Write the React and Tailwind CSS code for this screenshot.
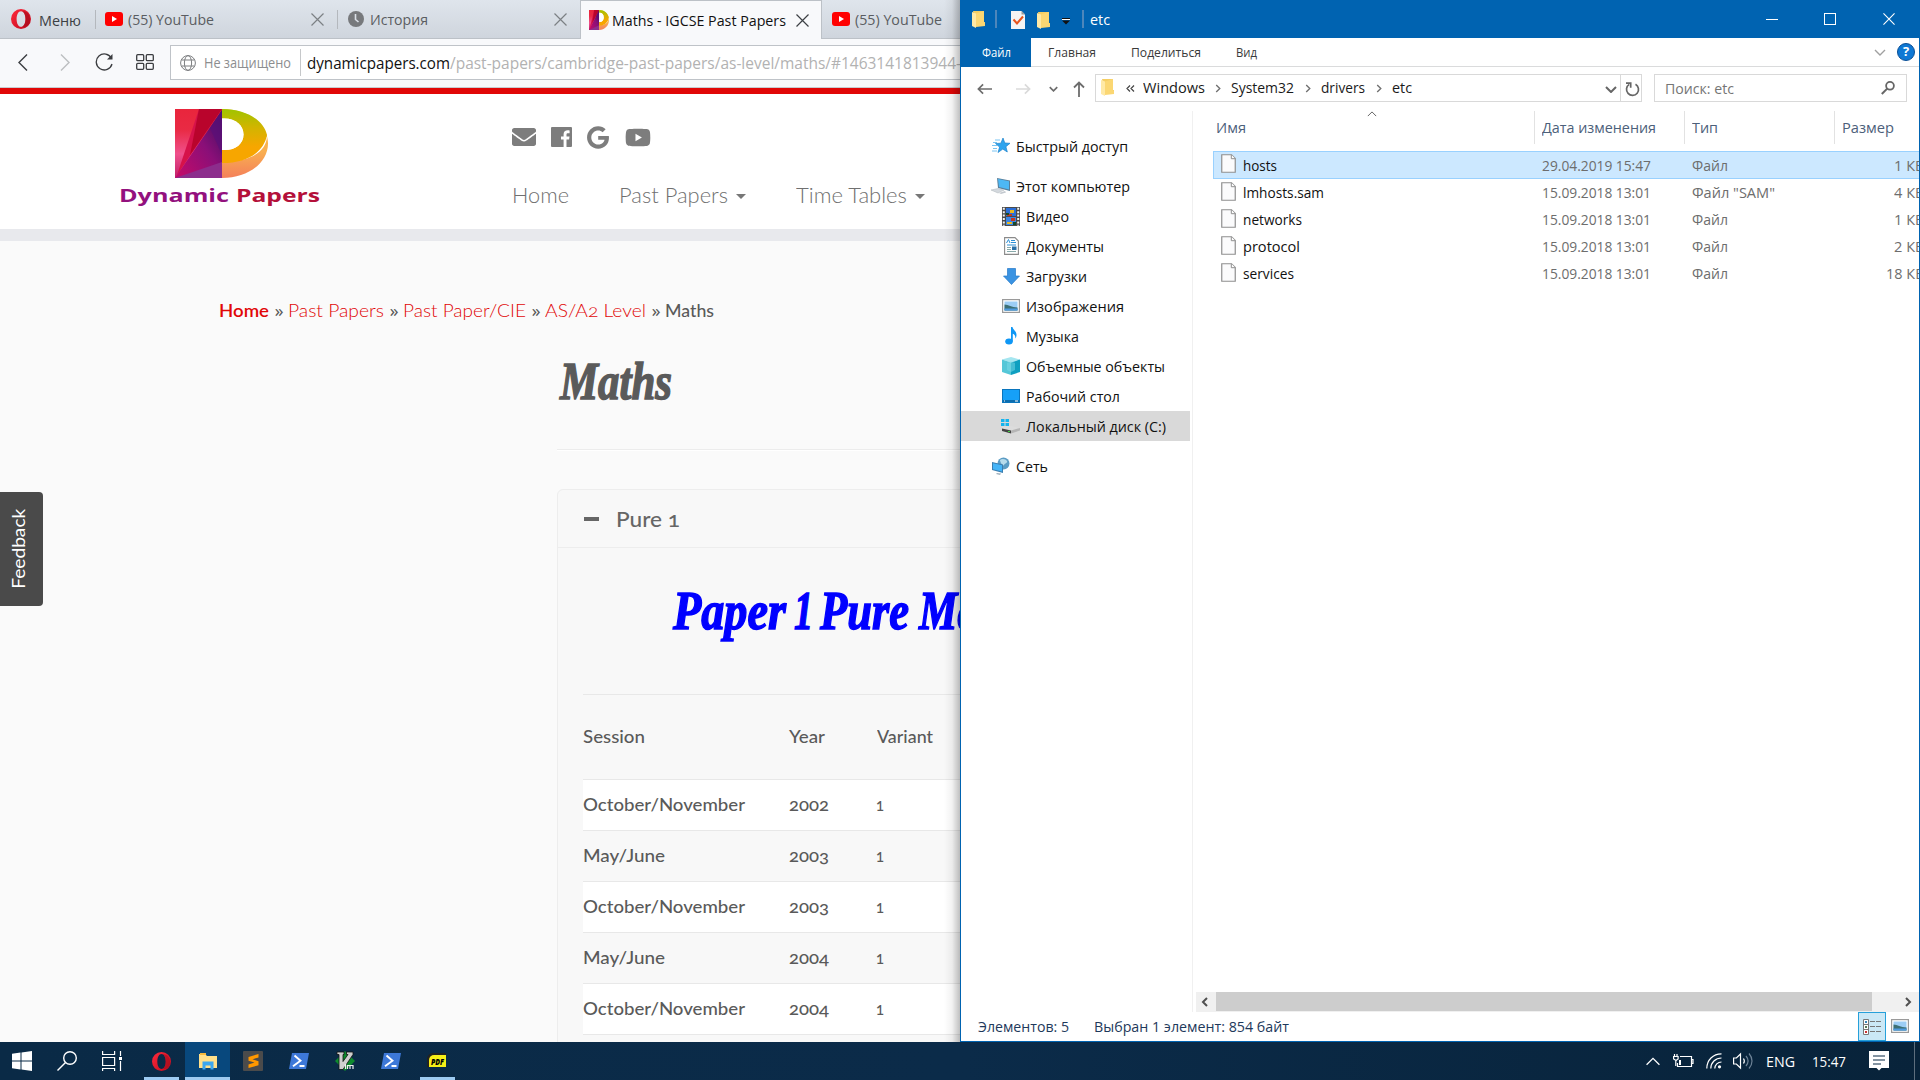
import React, { useLayoutEffect, useRef, useState } from "react";
import { FaEnvelope, FaGoogle, FaYoutube } from "react-icons/fa";

const ui = "font-['Open_Sans','Noto_Sans',sans-serif]";
const lato = "font-['Lato',sans-serif]";
const script = "font-['Liberation_Serif',serif] font-bold italic";

/* Text condensed or widened to fill the width given by its classes. */
function Fit({ children, className = "" }) {
  const outer = useRef(null);
  const inner = useRef(null);
  const [scale, setScale] = useState(1);
  useLayoutEffect(() => {
    setScale(outer.current.offsetWidth / parseFloat(getComputedStyle(inner.current).width));
  }, []);
  return (
    <span ref={outer} className={`block shrink-0 whitespace-nowrap ${className}`}>
      <span ref={inner} className="inline-block origin-left" style={{ transform: `scaleX(${scale})` }}>
        {children}
      </span>
    </span>
  );
}

/* ---------- icons ---------- */
function Opera({ className }) {
  return (
    <svg viewBox="0 0 20 20" className={className}>
      <defs>
        <linearGradient id="op" x1="0" x2="1" y1="0" y2="1">
          <stop offset="0" stopColor="#ff2a3c" />
          <stop offset="1" stopColor="#c00a1e" />
        </linearGradient>
      </defs>
      <path fillRule="evenodd" fill="url(#op)" d="M10 0a10 10 0 1 0 0 20a10 10 0 1 0 0-20zM10 2.2c2.7 0 4.4 3.4 4.4 7.8s-1.700 7.800-4.400 7.800S5.600 14.400 5.600 10 7.300 2.200 10 2.200z" />
      <path fill="#a30d1c" opacity=".6" d="M11 2.300C17 2 19.500 7 19 12c-.5 4-4 6.500-8 5.700 2.500-1 3.600-4.200 3.600-7.700S13.500 3.300 11 2.300z" />
    </svg>
  );
}
function YT({ className }) {
  return (
    <svg viewBox="0 0 18 14" className={className}>
      <rect width="18" height="14" rx="3" fill="#f00" />
      <path d="M7 4l5 3-5 3z" fill="#fff" />
    </svg>
  );
}
function Cross({ className }) {
  return (
    <svg viewBox="0 0 13 13" fill="none" stroke="currentColor" strokeWidth="1.2" className={className}>
      <path d="M.5.5l12 12M12.500.5l-12 12" />
    </svg>
  );
}
function Chev({ d = "M1 1l5 5 5-5", w = 1.5, vb = "0 0 12 7", className }) {
  return (
    <svg viewBox={vb} fill="none" stroke="currentColor" strokeWidth={w} className={className}>
      <path d={d} />
    </svg>
  );
}
function LogoD({ className, id }) {
  return (
    <svg viewBox="0 0 93 69" preserveAspectRatio="none" className={className}>
      <defs>
        <linearGradient id={id + "a"} x1="0" x2="0" y1="0" y2="1">
          <stop offset="0" stopColor="#e9253c" />
          <stop offset=".3" stopColor="#e92a44" />
          <stop offset=".65" stopColor="#f0508c" />
          <stop offset="1" stopColor="#c0206a" />
        </linearGradient>
        <linearGradient id={id + "b"} x1="0" x2="0" y1="0" y2="1">
          <stop offset="0" stopColor="#9fc400" />
          <stop offset=".35" stopColor="#d3b400" />
          <stop offset=".7" stopColor="#f7a600" />
        </linearGradient>
        <linearGradient id={id + "c"} x1="0" x2="0" y1="0" y2="1">
          <stop offset="0" stopColor="#f9b93a" />
          <stop offset=".6" stopColor="#f9b050" />
          <stop offset="1" stopColor="#f4805a" />
        </linearGradient>
        <linearGradient id={id + "d"} x1="1" x2="0" y1="0" y2="1">
          <stop offset="0" stopColor="#38105f" />
          <stop offset=".45" stopColor="#8a0f78" />
          <stop offset="1" stopColor="#c80a68" />
        </linearGradient>
      </defs>
      <rect width="47" height="69" fill={`url(#${id}a)`} />
      <path d="M24 0H47L2 66z" fill="#d6124a" />
      <path d="M24 0H47L15 46z" fill="#b9042c" />
      <path d="M47 1V69H0z" fill={`url(#${id}d)`} />
      <path d="M47 1V46L35 19z" fill="#5a1079" opacity=".7" />
      <path d="M47 53V69H0z" fill="#8c2d8c" />
      <path d="M47 0C73 0 93 15 93 34.500S73 69 47 69V53C80 53 91 40 92 28z" fill={`url(#${id}c)`} />
      <path fillRule="evenodd" d="M47 0C72 0 89 12 92 26C89 42 74 54 47 54zM47 9.500V41C60 42 68.500 35 68.500 25.500S60 8.500 47 9.500z" fill={`url(#${id}b)`} />
      <path d="M47 9.500V41C60 42 68.500 35 68.500 25.500S60 8.500 47 9.500z" fill="#fff" />
    </svg>
  );
}
function FolderStrip({ className }) {
  return (
    <svg viewBox="0 0 13 17" className={className}>
      <path d="M1 0h11v11h1v4H4z" fill="#f5ce63" />
      <path d="M0 1l4 1.500V17L0 15z" fill="#ffe9a6" />
      <path d="M4 2.500L12 0v11l1 1v3l-9 1z" fill="#fbd773" />
    </svg>
  );
}
function FileIcon() {
  return (
    <svg viewBox="0 0 15 19" className="h-[19px] w-[15px] shrink-0">
      <path d="M.75.75H10.500L14.250 4.500V18.250H.75z" fill="#fbfbfc" stroke="#8f8f8f" strokeWidth="1.200" />
      <path d="M10.300.75V4.700H14.250" fill="#fff" stroke="#8f8f8f" strokeWidth="1" />
    </svg>
  );
}
const sideIcons = {
  star: (
    <svg viewBox="0 0 18 18" className="h-[18px] w-[18px]">
      <path d="M11 1l1.800 5 5.200.3-4.100 3.400 1.400 5.300-4.500-2.900L6 15.500l1.600-5.400L3.500 6.500l5.400-.3z" fill="#2fa4ee" stroke="#1b82cc" strokeWidth=".7" />
      <path d="M3 3h5M1 5.500h4M0 8.500h5M1 11.500h4M0 14h5" stroke="#6bbdf0" strokeWidth=".9" />
    </svg>
  ),
  pc: (
    <svg viewBox="0 0 20 18" className="h-[18px] w-[20px]">
      <path d="M6 1l13 2.500V14L7 11z" fill="#5a7f9a" />
      <path d="M7 2l11 2.200V12.500L8 10z" fill="#4db8f5" />
      <path d="M0 13l7-1.500 6 1.500-6 3z" fill="#d4d9de" stroke="#adb4bb" strokeWidth=".5" />
      <path d="M8 16l6-2 1 1.500-5 1.500z" fill="#c3c9cf" />
    </svg>
  ),
  video: (
    <svg viewBox="0 0 18 19" className="h-[19px] w-[18px]">
      <rect width="18" height="19" fill="#4a4a4a" />
      <path d="M1.800.8v18M16.200.8v18" stroke="#f3f3f3" strokeWidth="2" strokeDasharray="2 1.400" />
      <rect x="4" y="1" width="10" height="8" fill="#2c6fd6" />
      <rect x="4" y="10" width="10" height="8" fill="#3a86e8" />
      <path d="M8 3h4v3H8zM5 15h5v2H5z" fill="#e8b820" />
      <path d="M5 7h5v2H5zM9 11h4v3H9z" fill="#c8371c" />
      <path d="M4 6h3v2H4zM11 15h3v3h-3z" fill="#164a2a" />
    </svg>
  ),
  doc: (
    <svg viewBox="0 0 15 18" className="h-[18px] w-[15px]">
      <path d="M.6.6H11L14.400 4v13.400H.6z" fill="#fff" stroke="#8a8a8a" strokeWidth="1.100" />
      <path d="M2.500 6l2-3.500L6 6M7 3.500h4M7 5.500h5M3 8h9" stroke="#2c8fd6" fill="none" />
      <path d="M3 10.500h4M3 12.500h4M3 14.500h9" stroke="#8aa" />
      <rect x="8" y="9.500" width="4.500" height="3.500" fill="#2a70a8" />
    </svg>
  ),
  down: (
    <svg viewBox="0 0 17 17" className="h-[17px] w-[17px]">
      <path d="M4.500.5h8V8H16.500L8.500 16.500.5 8H4.500z" fill="#3a93e2" stroke="#2478c8" strokeWidth=".7" />
    </svg>
  ),
  pic: (
    <svg viewBox="0 0 18 14" className="h-[14px] w-[18px]">
      <rect x=".6" y=".6" width="16.800" height="12.800" fill="#fff" stroke="#9a9a9a" strokeWidth="1.200" />
      <rect x="2.500" y="2.500" width="13" height="9" fill="#9ccdf5" />
      <path d="M2.500 5.500c4 0 7 3 13 3v3h-13z" fill="#3d6f74" />
      <path d="M2.500 9.500h13v2h-13z" fill="#4f9be0" />
    </svg>
  ),
  music: (
    <svg viewBox="0 0 12 18" className="h-[18px] w-[12px]">
      <ellipse cx="4" cy="14.500" rx="3.800" ry="3" fill="#0f97f5" />
      <path d="M6 0h1.500c.5 3 4.200 4 4 8 0 1.500-.5 2.500-1.200 3.500.3-3-1-4.300-2.500-4.800V14.500H6z" fill="#0f97f5" />
    </svg>
  ),
  cube: (
    <svg viewBox="0 0 18 18" className="h-[18px] w-[18px]">
      <path d="M9 0l9 2.500L9 5.500 0 2.500z" fill="#a5e6f0" />
      <path d="M0 2.500l9 3V18l-9-3z" fill="#55c7d8" />
      <path d="M18 2.500l-9 3V18l9-3z" fill="#0e9fc0" />
      <path d="M5 6l4-1.500 4 1.500v7l-4 2-4-2z" fill="#7edce8" opacity=".5" />
    </svg>
  ),
  desk: (
    <svg viewBox="0 0 18 14" className="h-[14px] w-[18px]">
      <rect x=".5" y=".5" width="17" height="13" fill="#16a0f8" stroke="#0a75bd" />
      <path d="M1 12h16" stroke="#0b5d96" strokeWidth="1.500" />
      <path d="M2 12h1M13 12h3" stroke="#fff" />
    </svg>
  ),
  disk: (
    <svg viewBox="0 0 20 16" className="h-[16px] w-[20px]">
      <path d="M1 9l7-1.500 11 2.500v2.500L10 15.500 1 12z" fill="#dcdcdc" />
      <path d="M1 10.500l9 2V15.500L1 13z" fill="#444" />
      <path d="M10 12.500L19 10v2.500l-9 3z" fill="#b5b5b5" />
      <path d="M0 1h3.500v3H0zM4.500 1H8v3H4.500zM0 5h3.500v3H0zM4.500 5H8v3H4.500z" fill="#14b4ee" />
      <path d="M7 13.500h2" stroke="#3fd33f" />
    </svg>
  ),
  net: (
    <svg viewBox="0 0 18 18" className="h-[18px] w-[18px]">
      <circle cx="11.500" cy="6.500" r="6" fill="#5b9cc4" />
      <path d="M8 3c2-2 6-1 7 1s-2 2-3 4-4-3-4-5z" fill="#b7dcec" />
      <path d="M0 5l11 2.500V16L0 13z" fill="#3a7eb0" />
      <path d="M1 6.200l9 2V14.500L1 12.300z" fill="#45b4f7" />
      <path d="M5 16l4 .5-1 1.500-4-1z" fill="#9fb0bd" />
    </svg>
  ),
};

/* ---------- browser ---------- */
function TabStrip() {
  return (
    <div className={`flex h-[39px] items-center border-b border-[#bcc1c7] bg-gradient-to-b from-[#dfe5ec] to-[#cfd5dd] text-[15px] text-[#5a5d61] ${ui}`}>
      <Opera className="ml-[11px] h-5 w-5 shrink-0" />
      <Fit className="ml-2 w-[42px] pt-[2px] text-[#3c4044]">Меню</Fit>
      <div className="ml-[14px] h-[19px] w-px shrink-0 bg-[#b4b8bd]" />
      <YT className="ml-[9px] h-[14px] w-[18px] shrink-0" />
      <Fit className="ml-[5px] w-[86px]">(55) YouTube</Fit>
      <Cross className="ml-[97px] h-[13px] w-[13px] shrink-0 text-[#7c8084]" />
      <div className="ml-[13px] h-[19px] w-px shrink-0 bg-[#b4b8bd]" />
      <svg viewBox="0 0 16 16" className="ml-[10px] h-4 w-4 shrink-0">
        <circle cx="8" cy="8" r="8" fill="#77797c" />
        <path d="M7.500 3v5.500l3 2.500" fill="none" stroke="#dbe0e7" strokeWidth="1.600" />
      </svg>
      <Fit className="ml-[6px] w-[58px]">История</Fit>
      <Cross className="ml-[126px] h-[13px] w-[13px] shrink-0 text-[#7c8084]" />
      <div className="ml-[13px] -mb-px flex h-[39px] w-[242px] shrink-0 items-center self-start border border-b-0 border-[#bcc1c7] bg-[#f8f9fb] text-[#111]">
        <LogoD id="t" className="ml-[8px] h-5 w-5 shrink-0" />
        <Fit className="ml-[3px] w-[174px]">Maths - IGCSE Past Papers</Fit>
        <Cross className="ml-[10px] h-[13px] w-[13px] shrink-0 text-[#3c4044]" />
      </div>
      <YT className="ml-[10px] h-[14px] w-[18px] shrink-0" />
      <Fit className="ml-[5px] w-[87px]">(55) YouTube</Fit>
    </div>
  );
}

function AddressRow() {
  return (
    <div className={`flex h-[49px] items-center border-b border-[#c9ccd0] bg-[#f8f9fb] text-[#3b3d40] ${ui}`}>
      <Chev vb="0 0 10 17" d="M9 .5L1 8.500l8 8" w={1.400} className="-mt-[2px] ml-[18px] h-[17px] w-[10px] shrink-0" />
      <Chev vb="0 0 10 17" d="M1 .5l8 8-8 8" w={1.400} className="-mt-[2px] ml-8 h-[17px] w-[10px] shrink-0 text-[#bcbec0]" />
      <svg viewBox="0 0 19 18" className="-mt-[2px] ml-[25px] h-[18px] w-[19px] shrink-0" fill="none" stroke="currentColor" strokeWidth="1.300">
        <path d="M16.500 5.500A8 8 0 1 0 17 11" />
        <path d="M17.500 1v5.500H12z" fill="currentColor" stroke="none" />
      </svg>
      <svg viewBox="0 0 18 16" className="-mt-[2px] ml-[22px] h-4 w-[18px] shrink-0" fill="none" stroke="currentColor" strokeWidth="1.300">
        <rect x=".7" y=".7" width="7" height="6" rx="1" /><rect x="10.300" y=".7" width="7" height="6" rx="1" />
        <rect x=".7" y="9.300" width="7" height="6" rx="1" /><rect x="10.300" y="9.300" width="7" height="6" rx="1" />
      </svg>
      <div className="-mt-px ml-[16px] flex h-[35px] w-[900px] shrink-0 items-center border border-[#bfc3c8] bg-white">
        <svg viewBox="0 0 16 16" className="ml-[9px] h-4 w-4 shrink-0" fill="none" stroke="#7c7e80">
          <circle cx="8" cy="8" r="7.400" /><ellipse cx="8" cy="8" rx="3.600" ry="7.400" /><path d="M1.500 5h13M1.500 11h13" />
        </svg>
        <Fit className="ml-2 w-[87px] text-[14px] text-[#8c8e90]">Не защищено</Fit>
        <div className="ml-[9px] h-[27px] w-px shrink-0 bg-[#c6c8ca]" />
        <Fit className="ml-[6px] w-[143px] pt-px text-[16px] text-[#111]">dynamicpapers.com</Fit>
        <Fit className="w-[511px] pt-px text-[16px] text-[#b2b2b2]">/past-papers/cambridge-past-papers/as-level/maths/#1463141813944-</Fit>
      </div>
    </div>
  );
}

function Caret() {
  return <span className="mt-[3px] h-0 w-0 shrink-0 border-x-[5px] border-t-[5px] border-x-transparent border-t-[#777]" />;
}

function SiteHeader() {
  return (
    <div className="flex h-[147px] border-b-[12px] border-[#e8e9ed] bg-white">
      <div className="ml-[119px] w-[201px] shrink-0 pt-[15px]">
        <LogoD id="l" className="ml-[56px] h-[69px] w-[93px]" />
        <div className={`mt-[8px] flex h-5 items-center text-[17px] font-bold ${ui}`}>
          <Fit className="w-[110px] text-[#93117e]">Dynamic</Fit>
          <Fit className="ml-[7px] w-[84px] text-[#b4103a]">Papers</Fit>
        </div>
      </div>
      <div className="ml-[192px] pt-[32px]">
        <div className="flex h-[22px] items-center text-[#7d7d7d]">
          <FaEnvelope className="h-6 w-6" />
          <svg viewBox="0 0 21 20" className="ml-[15px] h-5 w-[21px]">
            <path fill="currentColor" d="M1 0h19a1 1 0 0 1 1 1v18a1 1 0 0 1-1 1h-4.500v-7.500h2.600l.4-3h-3V7.600c0-.9.4-1.400 1.500-1.400h1.600V3.500c-3.800-.6-6 .6-6 3.700v2.300H10v3h2.600V20H1a1 1 0 0 1-1-1V1a1 1 0 0 1 1-1z" />
          </svg>
          <FaGoogle className="ml-[15px] h-[23px] w-[22px]" />
          <FaYoutube className="ml-[16px] h-[25px] w-[26px]" />
        </div>
        <div className={`mt-[35px] flex h-6 items-center text-[21px] font-light text-[#707070] ${lato}`}>
          <Fit className="w-[57px]">Home</Fit>
          <Fit className="ml-[50px] mr-2 w-[109px]">Past Papers</Fit>
          <Caret />
          <Fit className="ml-[50px] mr-2 w-[111px]">Time Tables</Fit>
          <Caret />
        </div>
      </div>
    </div>
  );
}

const sessions = [
  ["October/November", "2002"],
  ["May/June", "2003"],
  ["October/November", "2003"],
  ["May/June", "2004"],
  ["October/November", "2004"],
];

function Raquo() {
  return <Fit className="mx-[4.500px] w-[10px] font-normal text-[#5a5a5a]">»</Fit>;
}

function PageBody() {
  return (
    <div className={`relative min-h-0 flex-1 overflow-hidden bg-[#fafafa] text-[#5a5a5a] [font-feature-settings:'onum'] ${lato}`}>
      <div className="ml-[219px] mt-[57px] flex h-6 items-center pt-px text-[18px] font-light text-[#e10707]">
        <Fit className="w-[50px] font-semibold">Home</Fit>
        <Raquo />
        <Fit className="w-[96px]">Past Papers</Fit>
        <Raquo />
        <Fit className="w-[123px]">Past Paper/CIE</Fit>
        <Raquo />
        <Fit className="w-[101px]">AS/A2 Level</Fit>
        <Raquo />
        <Fit className="w-[49px] font-medium text-[#5a5a5a]">Maths</Fit>
      </div>
      <div className={`ml-[560px] mt-[29px] flex h-[60px] items-center pt-[2px] text-[53px] [-webkit-text-stroke:1.500px_#5a5a5a] ${script}`}>
        <Fit className="w-[112px]">Maths</Fit>
      </div>
      <div className="ml-[557px] mt-[38px] h-[2px] border-t border-[#ececec] bg-white" />
      <div className="-mr-2 ml-[557px] mt-[38px] h-[700px] rounded-md border border-[#ededed] bg-[#f8f8f8]">
        <div className="flex h-[58px] items-center border-b border-[#ededed] pl-[26px] text-[22px] font-medium text-[#666]">
          <span className="h-[4px] w-[15px] bg-[#666]" />
          <Fit className="ml-[17px] w-[64px]">Pure 1</Fit>
        </div>
        <div className={`ml-[115px] mt-8 flex h-[60px] items-center pt-[2px] text-[54px] text-[#0000ff] [-webkit-text-stroke:1.500px_#0000ff] ${script}`}>
          <Fit className="w-[113px]">Paper</Fit>
          <Fit className="ml-[8px] w-[19px]">1</Fit>
          <Fit className="ml-[7px] w-[89px]">Pure</Fit>
          <Fit className="ml-[10px] w-[60px]">Ma</Fit>
        </div>
        <div className="ml-[25px] mt-[54px] border-t border-[#e8e8e8] text-[18px] font-medium">
          <div className="flex h-[85px] items-center border-b border-[#e8e8e8] pb-[2px]">
            <div className="w-[206px]"><Fit className="w-[62px]">Session</Fit></div>
            <div className="w-[87px]"><Fit className="w-[36px]">Year</Fit></div>
            <Fit className="ml-px w-[56px]">Variant</Fit>
          </div>
          {sessions.map(([s, y], i) => (
            <div key={i} className="flex h-[51px] items-center border-b border-[#e8e8e8] pb-[2px] odd:bg-[#f8f8f8] even:bg-white">
              <div className="w-[206px]">
                <Fit className={s === "May/June" ? "w-[82px]" : "w-[162px]"}>{s}</Fit>
              </div>
              <div className="w-[87px]"><Fit className="w-[40px]">{y}</Fit></div>
              <Fit className="w-[8px]">1</Fit>
            </div>
          ))}
        </div>
      </div>
      <div className="absolute left-0 top-[251px] flex h-[114px] w-[43px] items-center justify-center rounded-r-[4px] bg-[#4a4a4a] pr-[5px] text-[17px] text-white">
        <Fit className="w-[80px] -rotate-90">Feedback</Fit>
      </div>
    </div>
  );
}

function Browser() {
  return (
    <div className="relative flex h-full w-[960px] shrink-0 flex-col overflow-hidden">
      <TabStrip />
      <AddressRow />
      <div className="h-[6px] shrink-0 bg-[#e10707]" />
      <SiteHeader />
      <PageBody />
      <div className="absolute inset-y-0 right-0 w-[16px] bg-gradient-to-r from-transparent via-black/5 to-black/25" />
    </div>
  );
}

/* ---------- explorer ---------- */
function TitleBar() {
  return (
    <div className="flex h-[38px] shrink-0 items-center bg-[#0063b1] text-white">
      <FolderStrip className="ml-[11px] h-[17px] w-[13px]" />
      <div className="ml-[10px] h-[18px] w-[2px] bg-[#4d86bb]" />
      <svg viewBox="0 0 14 18" className="ml-[14px] mt-[2px] h-[18px] w-[14px]">
        <path d="M0 0h10.500L14 3.500V18H0z" fill="#f4f4f4" /><path d="M10.500 0L14 3.500h-3.500z" fill="#9a9a9a" />
        <path d="M2.500 8.500l3.500 4L12 5.500" fill="none" stroke="#e8541c" strokeWidth="2" />
      </svg>
      <FolderStrip className="ml-[12px] mt-[2px] h-[17px] w-[13px]" />
      <svg viewBox="0 0 8 7" className="ml-[12px] mt-1 h-[7px] w-2">
        <path d="M0 .5h8" stroke="#111" /><path d="M0 1.500h8" stroke="#fff" /><path d="M0 2.500h8L4 6.500z" fill="#111" />
      </svg>
      <div className="ml-[12px] h-[18px] w-[2px] bg-[#4d86bb]" />
      <Fit className="ml-[6px] w-[20px] text-[15px]">etc</Fit>
      <div className="ml-[656px] h-px w-[12px] bg-white" />
      <div className="ml-[46px] h-[12px] w-[12px] border border-white" />
      <Cross className="ml-[47px] h-[12px] w-[12px]" />
    </div>
  );
}

function Ribbon() {
  return (
    <div className="flex h-[29px] shrink-0 items-center border-b border-[#dadbdc] text-[12.500px] text-[#3a3a3a]">
      <div className="-mb-px flex h-[29px] w-[70px] items-center bg-[#0063b1] pl-[21px] pt-px text-white">
        <Fit className="w-[29px]">Файл</Fit>
      </div>
      <Fit className="ml-[17px] w-[48px] pt-[2px]">Главная</Fit>
      <Fit className="ml-[35px] w-[70px] pt-[2px]">Поделиться</Fit>
      <Fit className="ml-[35px] w-[21px] pt-[2px]">Вид</Fit>
      <Chev className="ml-[617px] h-[7px] w-[12px] text-[#a0a0a0]" w={1.400} />
      <div className="ml-[11px] flex h-[18px] w-[18px] items-center justify-center rounded-full border border-[#0a4f96] bg-[#0f78d4] text-[13px] font-bold text-white">?</div>
    </div>
  );
}

function Crumb() {
  return <Chev vb="0 0 6 10" d="M1 1l4 4-4 4" w={1.500} className="h-[9px] w-[6px] shrink-0 text-[#707070]" />;
}

function PathRow() {
  return (
    <div className="flex h-[44px] shrink-0 pt-[7px] text-[15px] text-[#1a1a1a]">
      <div className="flex h-[28px] items-center text-[#6d6d6d]">
        <Chev vb="0 0 16 12" d="M16 6H1.500M6.500 1l-5 5 5 5" w={1.800} className="ml-[16px] mt-px h-[12px] w-[15px]" />
        <Chev vb="0 0 16 12" d="M0 6h14.500M9.500 1l5 5-5 5" w={1.800} className="ml-[24px] mt-px h-[12px] w-[15px] text-[#dadada]" />
        <Chev className="ml-[18px] mt-px h-[6px] w-[9px]" w={2.200} />
        <Chev vb="0 0 12 16" d="M6 16V1.500M1 6.500l5-5 5 5" w={1.800} className="ml-[15px] mt-[2px] h-[16px] w-[12px]" />
      </div>
      <div className="ml-[10px] flex h-[28px] w-[547px] items-center border border-[#d9d9d9]">
        <FolderStrip className="ml-[5px] -mt-[2px] h-[17px] w-[13px] shrink-0" />
        <Chev vb="0 0 9 7" d="M4 .5l-3 3 3 3M8 .5l-3 3 3 3" w={1.200} className="ml-[12px] h-[7px] w-[9px] shrink-0 text-[#444]" />
        <Fit className="-mt-[2px] ml-[8px] w-[62px]">Windows</Fit>
        <span className="w-[10px]" /><Crumb />
        <Fit className="-mt-[2px] ml-[10px] w-[63px]">System32</Fit>
        <span className="w-[11px]" /><Crumb />
        <Fit className="-mt-[2px] ml-[10px] w-[44px]">drivers</Fit>
        <span className="w-[11px]" /><Crumb />
        <Fit className="-mt-[2px] ml-[10px] w-[20px]">etc</Fit>
        <Chev className="ml-[193px] mt-[3px] h-[7px] w-[12px] shrink-0 text-[#666]" w={2} />
        <div className="ml-[3px] h-full w-px shrink-0 bg-[#d9d9d9]" />
        <svg viewBox="0 0 15 15" className="ml-[4px] mt-[2px] h-[15px] w-[15px] shrink-0" fill="none" stroke="#666" strokeWidth="1.700">
          <path d="M10.500 2.200A6 6 0 1 1 4.200 2.400" /><path d="M1 1.200h4.700v4.500" />
        </svg>
      </div>
      <div className="ml-[12px] flex h-[28px] w-[253px] items-center border border-[#d9d9d9]">
        <Fit className="ml-[10px] w-[69px] text-[#757575]">Поиск: etc</Fit>
        <svg viewBox="0 0 14 14" className="ml-[147px] h-[14px] w-[14px]" fill="none" stroke="#666" strokeWidth="1.800">
          <circle cx="9" cy="4.800" r="3.900" /><path d="M6.200 7.600L.8 13" strokeWidth="2" />
        </svg>
      </div>
    </div>
  );
}

const tree = [
  { icon: "star", w: "w-[112px]", label: "Быстрый доступ", top: true },
  { icon: "pc", w: "w-[114px]", label: "Этот компьютер", top: true, gap: true },
  { icon: "video", w: "w-[43px]", label: "Видео" },
  { icon: "doc", w: "w-[78px]", label: "Документы" },
  { icon: "down", w: "w-[61px]", label: "Загрузки" },
  { icon: "pic", w: "w-[98px]", label: "Изображения" },
  { icon: "music", w: "w-[53px]", label: "Музыка" },
  { icon: "cube", w: "w-[139px]", label: "Объемные объекты" },
  { icon: "desk", w: "w-[94px]", label: "Рабочий стол" },
  { icon: "disk", w: "w-[140px]", label: "Локальный диск (C:)", active: true },
  { icon: "net", w: "w-[32px]", label: "Сеть", top: true, gap: true },
];

function Sidebar() {
  return (
    <div className="w-[232px] shrink-0 border-r border-[#f0f0f0] pr-[2px] pt-[20px] text-[15px] text-[#111]">
      {tree.map((t) => (
        <div key={t.label} className={`flex h-[30px] items-center ${t.top ? "pl-[30px]" : "pl-[40px]"} ${t.gap ? "mt-[10px]" : ""} ${t.active ? "bg-[#d9d9d9]" : ""}`}>
          <span className={`flex items-center justify-center ${t.top ? "w-5" : "w-[20px]"}`}>{sideIcons[t.icon]}</span>
          <Fit className={`ml-[5px] ${t.w}`}>{t.label}</Fit>
        </div>
      ))}
    </div>
  );
}

const files = [
  { name: "hosts", w: "w-[34px]", date: "29.04.2019 15:47", type: "Файл", tw: "w-[36px]", size: "1 КБ", sw: "w-[30px]" },
  { name: "lmhosts.sam", w: "w-[81px]", date: "15.09.2018 13:01", type: 'Файл "SAM"', tw: "w-[83px]", size: "4 КБ", sw: "w-[30px]" },
  { name: "networks", w: "w-[59px]", date: "15.09.2018 13:01", type: "Файл", tw: "w-[36px]", size: "1 КБ", sw: "w-[30px]" },
  { name: "protocol", w: "w-[57px]", date: "15.09.2018 13:01", type: "Файл", tw: "w-[36px]", size: "2 КБ", sw: "w-[30px]" },
  { name: "services", w: "w-[51px]", date: "15.09.2018 13:01", type: "Файл", tw: "w-[36px]", size: "18 КБ", sw: "w-[38px]" },
];

function FileList() {
  return (
    <div className="flex min-w-0 flex-1 flex-col overflow-hidden text-[15px]">
      <div className="relative flex h-[33px] items-center text-[#4c607a]">
        <Fit className="ml-[23px] w-[30px]">Имя</Fit>
        <div className="ml-[288px] h-full w-px bg-[#e2e2e2]" />
        <Fit className="ml-[7px] w-[114px]">Дата изменения</Fit>
        <div className="ml-[28px] h-full w-px bg-[#e2e2e2]" />
        <Fit className="ml-[7px] w-[26px]">Тип</Fit>
        <div className="ml-[116px] h-full w-px bg-[#e2e2e2]" />
        <Fit className="ml-[7px] w-[52px]">Размер</Fit>
        <Chev d="M1 6l5-5 5 5" w={1.200} className="absolute left-[174px] top-0 h-[6px] w-[10px] text-[#666]" />
      </div>
      <div className="ml-[20px] mt-[7px] w-[712px]">
        {files.map((f, i) => (
          <div key={f.name} className={`flex items-center border ${i === 0 ? "h-[28px] border-[#99d1ff] bg-[#cce8ff]" : "h-[27px] border-transparent"}`}>
            <span className="ml-[7px] -mt-[3px]"><FileIcon /></span>
            <span className="ml-[7px] w-[299px] shrink-0 text-[#111]"><Fit className={f.w}>{f.name}</Fit></span>
            <Fit className="w-[109px] text-[#6d6d6d]">{f.date}</Fit>
            <span className="ml-[41px] w-[150px] shrink-0 text-[#6d6d6d]"><Fit className={f.tw}>{f.type}</Fit></span>
            <span className="flex w-[82px] shrink-0 justify-end text-[#6d6d6d]"><Fit className={f.sw}>{f.size}</Fit></span>
          </div>
        ))}
      </div>
      <div className="ml-[3px] mt-auto flex h-[20px] items-center bg-[#f0f0f0] text-[#505050]">
        <Chev vb="0 0 7 10" d="M6 1L2 5l4 4" w={2} className="ml-[5px] h-[10px] w-[7px]" />
        <div className="ml-[8px] h-full w-[656px] border-b border-[#f0f0f0] bg-[#cdcdcd]" />
        <Chev vb="0 0 7 10" d="M1 1l4 4-4 4" w={2} className="ml-[33px] h-[10px] w-[7px]" />
      </div>
    </div>
  );
}

function StatusBar() {
  return (
    <div className="flex h-[29px] shrink-0 items-center text-[14.500px] text-[#1e395b]">
      <Fit className="ml-[17px] w-[91px]">Элементов: 5</Fit>
      <Fit className="ml-[25px] w-[195px]">Выбран 1 элемент: 854 байт</Fit>
      <div className="ml-[569px] flex h-[29px] w-[28px] items-center justify-center border border-[#26a0da] bg-[#cbe8f6]">
        <svg viewBox="0 0 18 16" className="h-4 w-[18px]" fill="none" stroke="#777">
          <path d="M.5.5h5v15h-5zM.5 5.500h5M.5 10.500h5" fill="#fff" />
          <path d="M7 2.500h5M13 2.500h5M7 7.500h5M13 7.500h5M7 12.500h5M13 12.500h5" />
          <path d="M2 3h2" stroke="#3a86b8" strokeWidth="2" /><path d="M2 8h2" stroke="#557a55" strokeWidth="2" /><path d="M2 13h2" stroke="#c33" strokeWidth="2" />
        </svg>
      </div>
      <span className="-mt-px ml-[5px]">{sideIcons.pic}</span>
    </div>
  );
}

function Explorer() {
  return (
    <div className={`flex h-full w-[960px] flex-col overflow-hidden border-x border-b border-[#0063b1] bg-white ${ui}`}>
      <TitleBar />
      <Ribbon />
      <PathRow />
      <div className="flex min-h-0 flex-1">
        <Sidebar />
        <FileList />
      </div>
      <StatusBar />
    </div>
  );
}

/* ---------- taskbar ---------- */
function PowerShell() {
  return (
    <svg viewBox="0 0 20 16" className="h-4 w-5">
      <path d="M3 0h17l-3 16H0z" fill="#3d78d8" />
      <path d="M5.500 2.500l6 5.200-7.500 5.600M10.500 13h5" fill="none" stroke="#fff" strokeWidth="1.900" />
    </svg>
  );
}

function Taskbar() {
  return (
    <div className={`flex h-[38px] items-center bg-gradient-to-r from-[#0a2a46] via-[#0b2b49] to-[#08233a] text-white ${ui}`}>
      <svg viewBox="0 0 20 20" className="ml-[12px] h-5 w-5" fill="#fff">
        <path d="M0 2.800l8.500-1.200v8H0zM9.500 1.400L20 0v9.600H9.500zM0 10.600h8.500v7.900L0 17.300zM9.500 10.600H20V20L9.500 18.600z" />
      </svg>
      <svg viewBox="0 0 20 20" className="ml-[25px] h-5 w-5" fill="none" stroke="#fff" strokeWidth="1.400">
        <circle cx="13" cy="7" r="6.300" /><path d="M8.500 11.500L.5 19.500" />
      </svg>
      <svg viewBox="0 0 20 20" className="ml-[25px] h-5 w-5" fill="none" stroke="#fff" strokeWidth="1.200">
        <path d="M.6 0v3.500h12V0M.6 6.500h12v8H.6zM.6 20v-2.500h12V20M18.500 0v5M18.500 10v10" /><path d="M17 7.500h3" strokeWidth="3" />
      </svg>
      <div className="ml-[22px] flex h-full w-[35px] items-center justify-center border-b-[3px] border-[#9dcbf2] pt-[3px]"><Opera className="h-[19px] w-[19px]" /></div>
      <div className="ml-[6px] flex h-full w-[45px] items-center justify-center border-b-[3px] border-[#9dcbf2] bg-[#08487d] pt-[3px]">
        <svg viewBox="0 0 18 17" className="h-[17px] w-[18px]">
          <path d="M0 1h6l2 2h10v12H0z" fill="#ffe08a" /><path d="M1 0h6v2H1z" fill="#f5b93d" />
          <path d="M3.500 16.500V8.500h11v8h-3v-4h-5v4z" fill="#3ba7ef" />
        </svg>
      </div>
      <div className="ml-[13px] flex h-5 w-5 items-center justify-center rounded-[1px] bg-[#4b4b4b]">
        <svg viewBox="0 0 11 14" className="h-[14px] w-[11px]"><path d="M10.500 0v3.500L4.500 5.300l6 2v4L.5 14v-3.500l6-1.900-6-1.900V2.900z" fill="#ff9800" /></svg>
      </div>
      <span className="w-[26px]" />
      <PowerShell />
      <svg viewBox="0 0 20 20" className="ml-[26px] h-5 w-5">
        <path d="M10 0l10 10-10 10L0 10z" fill="#0d8a2d" />
        <path d="M2 1h7v2.500H8v7L13 3.500h-1.500V1H18v2.500L8 18.500H4V3.500H2z" fill="#cfcfcf" stroke="#111" strokeWidth=".8" />
        <path d="M10.500 13v5M12.500 18v-3.500h2.500V18M15 14.500h3V18" fill="none" stroke="#eee" strokeWidth="1.200" />
      </svg>
      <span className="w-[26px]" />
      <PowerShell />
      <div className="ml-[19px] flex h-full w-[35px] items-center justify-center border-b-[3px] border-[#9dcbf2] pt-[3px]">
        <div className="flex h-[12px] w-[17px] items-center justify-center rounded-tl-[5px] bg-[#f7ef17] text-[9px] font-extrabold italic leading-none text-black shadow-[-1px_-1px_0_1px_#222]">
          <Fit className="w-[13px]">PDF</Fit>
        </div>
      </div>

      <Chev d="M1 6l5-5 5 5" w={1} className="ml-auto h-[9px] w-[16px]" />
      <svg viewBox="0 0 21 14" className="ml-[12px] h-[14px] w-[21px]" fill="none" stroke="#fff" strokeWidth="1.200">
        <path d="M7 2.500h11.500v10H4.500V9M18.500 5.500h1.500v4h-1.500" /><path d="M1.500 0v2M4 0v2M.6 2.500h4.500V5L3 6.500.6 5zM2.800 6v6" /><path d="M6 6h2v5H6z" fill="#fff" stroke="none" />
      </svg>
      <svg viewBox="0 0 16 16" className="ml-[12px] h-4 w-4" fill="none" stroke="#fff" strokeWidth="1.200">
        <path d="M.8 15.500C.8 7 7 .8 15.500.8M4.800 15.500c0-6 4.700-10.500 10.700-10.500M8.800 15.500c0-3.500 3-6.500 6.700-6.500" /><circle cx="13.500" cy="13.800" r="1.600" fill="#fff" stroke="none" />
      </svg>
      <svg viewBox="0 0 20 18" className="ml-[11px] h-[18px] w-5" fill="none" stroke="#fff" strokeWidth="1.200">
        <path d="M.6 6h2.800L7.500 2v14L3.400 12H.6zM10.500 6.500c1 1.500 1 3.500 0 5" /><path d="M13 4c2.500 3 2.500 7 0 10M16 1.500c4 4.500 4 10.500 0 15" stroke="#6d8296" />
      </svg>
      <Fit className="ml-[13px] w-[29px] pt-px text-[14.500px]">ENG</Fit>
      <Fit className="ml-[17px] w-[34px] pt-px text-[14.500px]">15:47</Fit>
      <svg viewBox="0 0 20 20" className="ml-[23px] h-5 w-5">
        <path d="M0 0h20v17h-7.500L10 19.500 7.500 17H0z" fill="#fff" /><path d="M4 5h12M4 9h12M4 13h8" stroke="#0a2a46" strokeWidth="1.200" />
      </svg>
      <div className="ml-[25px] mr-[5px] h-full w-px bg-[#5d6e7d]" />
    </div>
  );
}

export default function App() {
  return (
    <div className="flex h-[1080px] w-[1920px] flex-col overflow-hidden">
      <div className="flex h-[1042px] shrink-0">
        <Browser />
        <Explorer />
      </div>
      <Taskbar />
    </div>
  );
}
